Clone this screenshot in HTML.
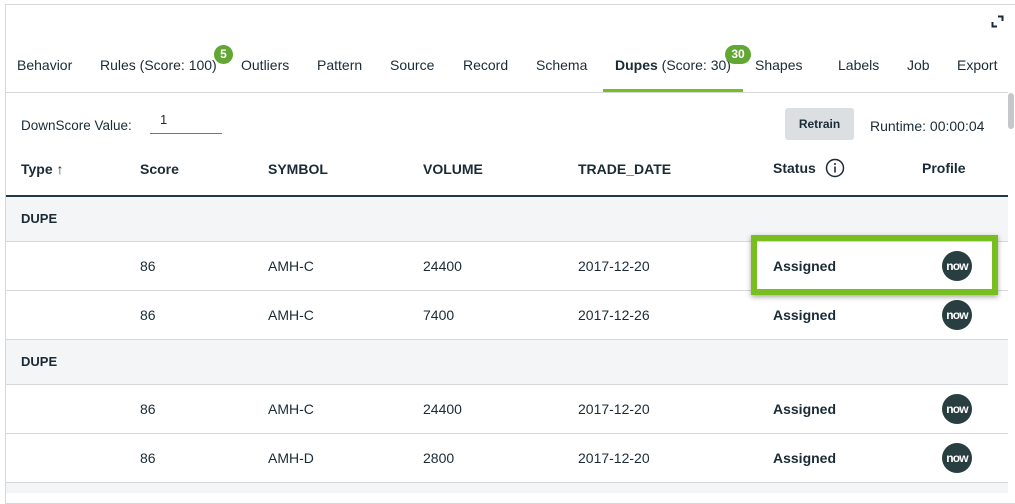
<!DOCTYPE html>
<html><head><style>
body{margin:0;width:1015px;height:489px;overflow:hidden;background:#fff;font-family:"Liberation Sans",sans-serif;color:#1a2b36;position:relative}
.panel{position:absolute;left:5px;top:4px;width:1012px;height:500px;border:1px solid #d5d9dc;box-sizing:border-box}
.t{position:absolute;font-size:14px;white-space:nowrap}
.tab{top:57px;font-size:14px}
.badge{position:absolute;background:#62a633;color:#fff;font-weight:bold;font-size:12px;border-radius:10px;height:19px;line-height:19px;text-align:center}
.row{position:absolute;left:6px;width:1002px;border-bottom:1px solid #d5d9dc}
.grp{background:#f4f5f6}
.b{font-weight:bold}
.now{position:absolute;width:30px;height:30px;border-radius:50%;background:#293e40;color:#fff;font-size:12px;font-weight:bold;text-align:center;line-height:30px;letter-spacing:-0.8px}
</style></head><body>
<div class="panel"></div>
<svg style="position:absolute;left:991px;top:15px" width="13" height="13" viewBox="0 0 13 13"><path d="M7 1.5H11.5V6M1.5 7V11.5H6" fill="none" stroke="#1a2b36" stroke-width="2"/></svg>
<div class="t tab" style="left:17px">Behavior</div>
<div class="t tab" style="left:100px">Rules (Score: 100)</div>
<div class="badge" style="left:214px;top:45px;width:19px">5</div>
<div class="t tab" style="left:241px">Outliers</div>
<div class="t tab" style="left:317px">Pattern</div>
<div class="t tab" style="left:390px">Source</div>
<div class="t tab" style="left:463px">Record</div>
<div class="t tab" style="left:536px">Schema</div>
<div class="t tab" style="left:615px"><b>Dupes</b> (Score: 30)</div>
<div class="badge" style="left:725px;top:45px;width:26px">30</div>
<div class="t tab" style="left:755px">Shapes</div>
<div class="t tab" style="left:838px">Labels</div>
<div class="t tab" style="left:907px">Job</div>
<div class="t tab" style="left:957px">Export</div>
<div style="position:absolute;left:6px;top:92px;width:1002px;height:1px;background:#d5d9dc"></div>
<div style="position:absolute;left:603px;top:89px;width:140px;height:3px;background:#78be20"></div>
<div style="position:absolute;left:1008px;top:93px;width:6px;height:36px;background:#c4c8cb;border-radius:3px"></div>
<div class="t" style="left:21px;top:118px;font-size:13.5px">DownScore Value:</div>
<div class="t" style="left:160px;top:112px;font-size:13px">1</div>
<div style="position:absolute;left:150px;top:133px;width:72px;height:1px;background:#777"></div>
<div style="position:absolute;left:785px;top:108px;width:69px;height:32px;background:#dcdfe2;border-radius:3px;font-size:12px;font-weight:bold;text-align:center;line-height:32px">Retrain</div>
<div class="t" style="left:870px;top:118px;font-size:14px">Runtime: 00:00:04</div>
<div class="t b" style="left:21px;top:161px">Type ↑</div>
<div class="t b" style="left:140px;top:161px">Score</div>
<div class="t b" style="left:268px;top:161px">SYMBOL</div>
<div class="t b" style="left:423px;top:161px">VOLUME</div>
<div class="t b" style="left:578px;top:161px">TRADE_DATE</div>
<div class="t b" style="left:773px;top:160px">Status</div>
<svg style="position:absolute;left:825px;top:158px" width="20" height="20"><circle cx="10" cy="10" r="8.5" fill="none" stroke="#1a2b36" stroke-width="1.5"/><rect x="9.2" y="8.5" width="1.6" height="6" fill="#1a2b36"/><circle cx="10" cy="6" r="1" fill="#1a2b36"/></svg>
<div class="t b" style="left:922px;top:160px">Profile</div>
<div style="position:absolute;left:6px;top:195px;width:1002px;height:2px;background:#1f3a45"></div>

<div class="row grp" style="top:197px;height:44px"></div>
<div class="t b" style="left:21px;top:211px;font-size:13px">DUPE</div>
<div class="row" style="top:242px;height:48px"></div>
<div class="row" style="top:291px;height:48px"></div>
<div class="row grp" style="top:340px;height:44px"></div>
<div class="t b" style="left:21px;top:354px;font-size:13px">DUPE</div>
<div class="row" style="top:385px;height:48px"></div>
<div class="row" style="top:434px;height:48px"></div>
<div class="row grp" style="top:483px;height:10px;border:0"></div>

<div class="t" style="left:140px;top:258px">86</div><div class="t" style="left:268px;top:258px">AMH-C</div><div class="t" style="left:423px;top:258px">24400</div><div class="t" style="left:578px;top:258px">2017-12-20</div><div class="t b" style="left:773px;top:258px">Assigned</div><div class="now" style="left:942px;top:251px">now</div>
<div class="t" style="left:140px;top:307px">86</div><div class="t" style="left:268px;top:307px">AMH-C</div><div class="t" style="left:423px;top:307px">7400</div><div class="t" style="left:578px;top:307px">2017-12-26</div><div class="t b" style="left:773px;top:307px">Assigned</div><div class="now" style="left:942px;top:300px">now</div>
<div class="t" style="left:140px;top:401px">86</div><div class="t" style="left:268px;top:401px">AMH-C</div><div class="t" style="left:423px;top:401px">24400</div><div class="t" style="left:578px;top:401px">2017-12-20</div><div class="t b" style="left:773px;top:401px">Assigned</div><div class="now" style="left:942px;top:394px">now</div>
<div class="t" style="left:140px;top:450px">86</div><div class="t" style="left:268px;top:450px">AMH-D</div><div class="t" style="left:423px;top:450px">2800</div><div class="t" style="left:578px;top:450px">2017-12-20</div><div class="t b" style="left:773px;top:450px">Assigned</div><div class="now" style="left:942px;top:443px">now</div>

<div style="position:absolute;left:751px;top:235px;width:247px;height:60px;box-sizing:border-box;border:6px solid #78be20;box-shadow:0 2px 5px rgba(0,0,0,.35)"></div>
</body></html>
